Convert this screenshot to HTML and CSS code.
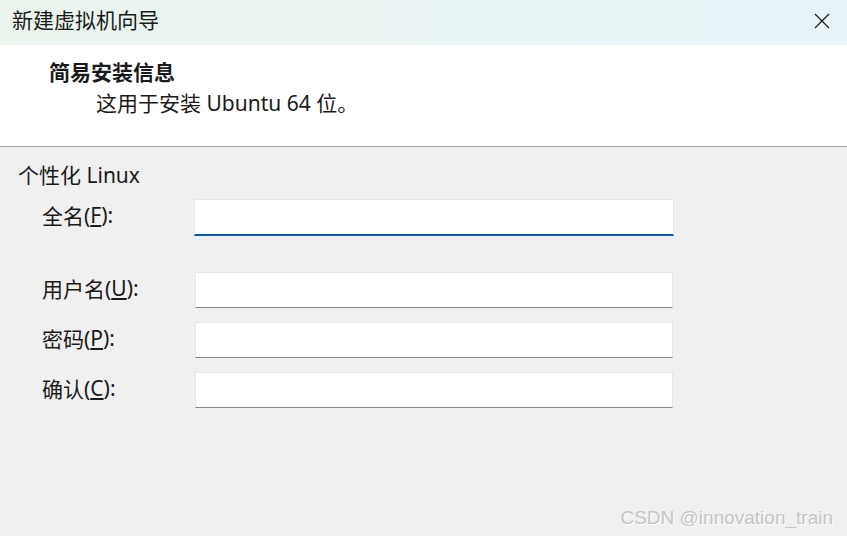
FILE: index.html
```html
<!DOCTYPE html>
<html lang="zh-CN">
<head>
<meta charset="utf-8">
<title>新建虚拟机向导</title>
<link rel="stylesheet" href="styles.css">
</head>
<body>
<div class="window">
  <div class="titlebar">
    <span class="title">新建虚拟机向导</span>
    <svg class="close" width="16" height="16" viewBox="0 0 16 16"><path d="M1 1 L15 15 M15 1 L1 15" stroke="#1a1a1a" stroke-width="1.2" fill="none"/></svg>
  </div>
  <div class="header">
    <div class="h-title">简易安装信息</div>
    <div class="h-sub">这用于安装 Ubuntu 64 位。</div>
  </div>
  <div class="content">
    <div class="group">个性化 Linux</div>
    <div class="form">
      <label class="lbl first">全名(<u>F</u>):</label>
      <div class="field focused first"></div>
      <label class="lbl">用户名(<u>U</u>):</label>
      <div class="field"></div>
      <label class="lbl">密码(<u>P</u>):</label>
      <div class="field"></div>
      <label class="lbl">确认(<u>C</u>):</label>
      <div class="field"></div>
    </div>
  </div>
  <div class="watermark">CSDN @innovation_train</div>
</div>
</body>
</html>
```

FILE: styles.css
```css
html, body {
  margin: 0;
  padding: 0;
}
body {
  background: #f0f0f0;
  font-family: "Noto Sans", "Noto Sans CJK SC", sans-serif;
  color: #1a1a1a;
  font-size: 21px;
}
.window {
  position: relative;
  width: 847px;
  height: 536px;
  overflow: hidden;
}
.titlebar {
  height: 45px;
  display: flex;
  align-items: center;
  justify-content: space-between;
  padding: 0 17px 0 12px;
  background: linear-gradient(90deg, #ebf5ee 0%, #e9f4f5 60%, #e8f4f8 100%);
  box-sizing: border-box;
}
.title {
  line-height: 28px;
  margin-top: -5px;
}
.close {
  margin-top: -4px;
}
.header {
  background: #ffffff;
  border-bottom: 1px solid #a0a0a0;
  padding-top: 13px;
  height: 88px;
}
.h-title {
  padding-left: 49px;
  font-weight: bold;
  line-height: 28px;
}
.h-sub {
  padding-left: 96px;
  margin-top: 3px;
  line-height: 28px;
}
.content {
  padding: 14px 0 0 18px;
}
.group {
  line-height: 28px;
}
.form {
  display: grid;
  grid-template-columns: 176px 479px;
  row-gap: 14px;
  margin-top: 10px;
}
.lbl {
  padding-left: 24px;
  height: 36px;
  display: flex;
  align-items: center;
  padding-bottom: 5px;
  box-sizing: border-box;
}
.lbl.first {
  margin-bottom: 22px;
}
.field {
  height: 36px;
  box-sizing: border-box;
  background: #ffffff;
  border: 1px solid #e6e6e6;
  border-bottom: 1px solid #868686;
  margin-left: 1px;
  width: 478px;
}
.field.first {
  margin-bottom: 22px;
}
.field.focused {
  margin-left: 0;
  width: 480px;
  height: 37px;
  border-bottom: 2px solid #005fb8;
}
.watermark {
  position: absolute;
  right: 14px;
  bottom: 7px;
  font-family: "Liberation Sans", Arial, sans-serif;
  font-size: 19px;
  color: #c4c4c4;
  text-shadow: 1px 1px 0 #ffffff;
}
```
